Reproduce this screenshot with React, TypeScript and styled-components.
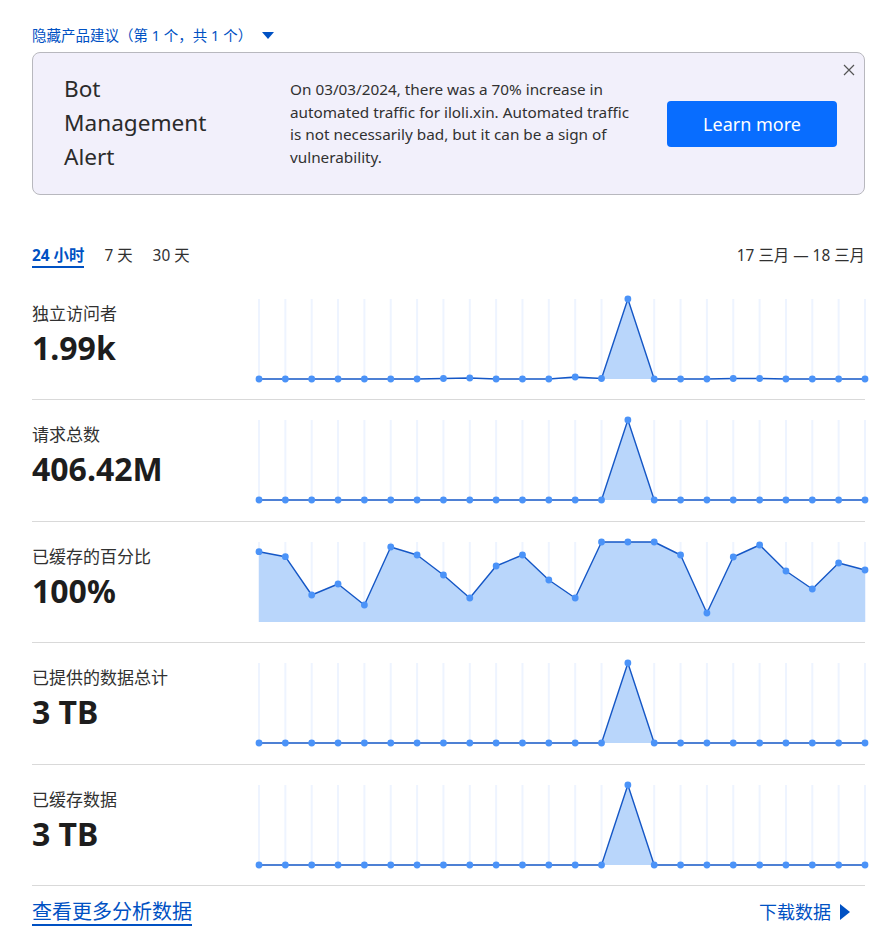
import React from "react";
import styled, { createGlobalStyle } from "styled-components";

const GlobalStyle = createGlobalStyle`
  html, body { margin: 0; padding: 0; background: #ffffff; }
  body {
    font-family: "Noto Sans", "Noto Sans CJK SC", sans-serif;
    color: #313131;
  }
  * { box-sizing: border-box; }
`;

const Page = styled.div`
  width: 879px;
  padding: 24px 14px 0 32px;
`;

const SuggestionToggle = styled.button`
  display: flex;
  align-items: center;
  gap: 10px;
  border: 0;
  background: none;
  padding: 0;
  margin: 0 0 6px;
  font-family: "Noto Sans", "Noto Sans CJK SC", sans-serif;
  font-size: 14.5px;
  line-height: 22px;
  color: #0051c3;
  cursor: pointer;
`;

const AlertBox = styled.section`
  position: relative;
  height: 143px;
  display: grid;
  grid-template-columns: 226px 1fr auto;
  align-items: center;
  padding: 0 27px 0 31px;
  background: #f2f0fb;
  border: 1px solid #b8b8be;
  border-radius: 8px;
`;

const AlertTitle = styled.h2`
  margin: 0 0 2px;
  font-size: 22.6px;
  line-height: 34px;
  font-weight: 400;
  color: #2b2b2b;
`;

const AlertText = styled.p`
  margin: 0 0 1px;
  font-size: 15.3px;
  line-height: 22.5px;
  color: #313131;
  white-space: nowrap;
`;

const PrimaryButton = styled.button`
  width: 170px;
  height: 46px;
  border: 0;
  border-radius: 4px;
  background: #086dff;
  color: #ffffff;
  font-family: "Noto Sans", sans-serif;
  font-size: 18px;
  cursor: pointer;
`;

const CloseButton = styled.button`
  position: absolute;
  top: 11px;
  right: 9px;
  width: 12px;
  height: 12px;
  padding: 0;
  border: 0;
  background: none;
  display: flex;
  cursor: pointer;
`;

const TabsBar = styled.div`
  display: flex;
  justify-content: space-between;
  align-items: flex-start;
  margin-top: 51px;
`;

const Tabs = styled.div`
  display: flex;
  gap: 20px;
`;

const Tab = styled.button<{ $active?: boolean }>`
  border: 0;
  background: none;
  padding: 0;
  font-family: "Noto Sans", "Noto Sans CJK SC", sans-serif;
  font-size: 15.4px;
  line-height: 20px;
  font-weight: ${(p) => (p.$active ? 700 : 400)};
  color: ${(p) => (p.$active ? "#0051c3" : "#313131")};
  border-bottom: 2px solid ${(p) => (p.$active ? "#0051c3" : "transparent")};
  cursor: pointer;
`;

const DateRange = styled.span`
  font-size: 15.4px;
  line-height: 20px;
  color: #313131;
`;

const MetricList = styled.div`
  margin-top: 11px;
`;

const MetricRow = styled.div`
  display: flex;
  padding: 20px 0 20.4px;
  border-bottom: 1px solid #d9d9d9;
`;

const MetricInfo = styled.div`
  width: 227px;
  flex: none;
  padding-top: 3px;
`;

const MetricLabel = styled.div`
  font-size: 17px;
  line-height: 24px;
  color: #313131;
`;

const MetricValue = styled.div`
  margin-top: 2px;
  font-size: 32px;
  line-height: 40px;
  font-weight: 700;
  color: #1d1d1d;
`;

const ChartBox = styled.div`
  flex: 1;
  height: 80px;
  svg { display: block; overflow: visible; }
`;

const Footer = styled.div`
  display: flex;
  justify-content: space-between;
  align-items: center;
  padding-top: 12px;
`;

const MoreLink = styled.a`
  font-size: 20px;
  line-height: 28px;
  color: #0051c3;
  text-decoration: underline;
  text-decoration-thickness: 2px;
  text-underline-offset: 5px;
  cursor: pointer;
`;

const DownloadLink = styled.a`
  display: flex;
  align-items: center;
  gap: 9px;
  margin-right: 15px;
  font-size: 18px;
  line-height: 28px;
  color: #0051c3;
  cursor: pointer;
`;

const W = 606;
const H = 80;

function Chart({ data }: { data: number[] }) {
  const step = W / (data.length - 1);
  const pts = data.map((y, i) => [i * step, y] as const);
  const line = pts.map(([x, y], i) => `${i ? "L" : "M"}${x.toFixed(2)},${y}`).join(" ");
  const area = `${line} L${W},${H} L0,${H} Z`;
  return (
    <svg width={W} height={H} viewBox={`0 0 ${W} ${H}`}>
      {pts.map(([x], i) => (
        <line key={i} x1={x} x2={x} y1={0} y2={H} stroke="#eef4ff" strokeWidth={2} />
      ))}
      <path d={area} fill="#b9d6fb" />
      <path d={line} fill="none" stroke="#1557c6" strokeWidth={1.4} strokeLinejoin="round" />
      {pts.map(([x, y], i) => (
        <circle key={i} cx={x} cy={y} r={3.4} fill="#4b93f8" />
      ))}
    </svg>
  );
}

const spike = (overrides: Record<number, number> = {}) =>
  Array.from({ length: 24 }, (_, i) => (i === 14 ? 0 : overrides[i] ?? 80));

const metrics = [
  { label: "独立访问者", value: "1.99k", data: spike({ 7: 79.5, 8: 79, 12: 78, 13: 79.5, 18: 79.5, 19: 79.5 }) },
  { label: "请求总数", value: "406.42M", data: spike() },
  {
    label: "已缓存的百分比",
    value: "100%",
    data: [9.7, 14.7, 53, 42, 63, 5, 13, 33, 56, 24, 13, 38, 56, 0, 0, 0, 13, 71, 15, 3, 29, 47, 21, 28],
  },
  { label: "已提供的数据总计", value: "3 TB", data: spike() },
  { label: "已缓存数据", value: "3 TB", data: spike() },
];

export default function App() {
  return (
    <>
      <GlobalStyle />
      <Page>
        <SuggestionToggle>
          隐藏产品建议（第 1 个，共 1 个）
          <svg width="12" height="7" viewBox="0 0 12 7">
            <path d="M0 0 H12 L6 7 Z" fill="#0051c3" />
          </svg>
        </SuggestionToggle>

        <AlertBox>
          <AlertTitle>
            Bot
            <br />
            Management
            <br />
            Alert
          </AlertTitle>
          <AlertText>
            On 03/03/2024, there was a 70% increase in
            <br />
            automated traffic for iloli.xin. Automated traffic
            <br />
            is not necessarily bad, but it can be a sign of
            <br />
            vulnerability.
          </AlertText>
          <PrimaryButton>Learn more</PrimaryButton>
          <CloseButton aria-label="close">
            <svg width="12" height="12" viewBox="0 0 12 12">
              <path d="M1 1 L11 11 M11 1 L1 11" stroke="#555" strokeWidth="1.2" />
            </svg>
          </CloseButton>
        </AlertBox>

        <TabsBar>
          <Tabs>
            <Tab $active>24 小时</Tab>
            <Tab>7 天</Tab>
            <Tab>30 天</Tab>
          </Tabs>
          <DateRange>17 三月 — 18 三月</DateRange>
        </TabsBar>

        <MetricList>
          {metrics.map((m) => (
            <MetricRow key={m.label}>
              <MetricInfo>
                <MetricLabel>{m.label}</MetricLabel>
                <MetricValue>{m.value}</MetricValue>
              </MetricInfo>
              <ChartBox>
                <Chart data={m.data} />
              </ChartBox>
            </MetricRow>
          ))}
        </MetricList>

        <Footer>
          <MoreLink>查看更多分析数据</MoreLink>
          <DownloadLink>
            下载数据
            <svg width="10" height="16" viewBox="0 0 10 16">
              <path d="M0 0 L10 8 L0 16 Z" fill="#0051c3" />
            </svg>
          </DownloadLink>
        </Footer>
      </Page>
    </>
  );
}
